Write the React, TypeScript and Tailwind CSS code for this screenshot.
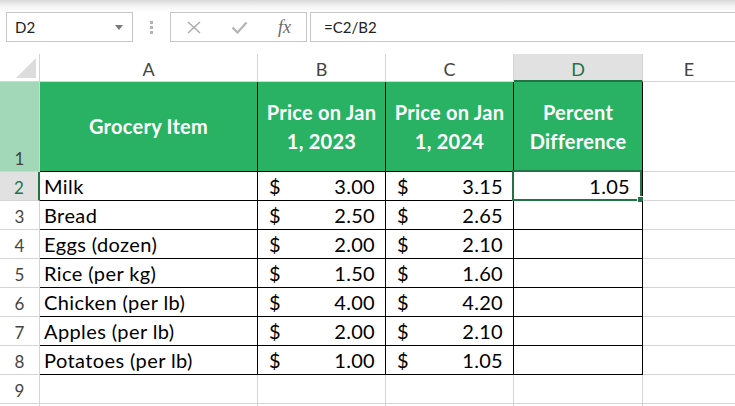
import React from 'react';

const rows = [
  ['Milk', '3.00', '3.15', '1.05'],
  ['Bread', '2.50', '2.65', ''],
  ['Eggs (dozen)', '2.00', '2.10', ''],
  ['Rice (per kg)', '1.50', '1.60', ''],
  ['Chicken (per lb)', '4.00', '4.20', ''],
  ['Apples (per lb)', '2.00', '2.10', ''],
  ['Potatoes (per lb)', '1.00', '1.05', ''],
];

const gray = 'border-[#d4d4d4]';

function RowHead({ n, active }: { n?: number; active?: boolean }) {
  return (
    <div
      className={`flex items-end justify-center pb-[4px] text-[17px] leading-none border-b ${gray} ${
        active ? 'bg-[#e1e1e1] text-[#217346] border-r-2 border-r-[#217346]' : 'bg-white text-[#444] border-r'
      }`}
    >
      {n}
    </div>
  );
}

function Money({ v }: { v: string }) {
  return (
    <div className="flex items-end justify-between pl-[11px] pr-[10px] pb-[4px] text-[20px] leading-none tracking-[0.3px] border-r border-b border-black">
      <span>$</span>
      <span>{v}</span>
    </div>
  );
}

export default function App() {
  return (
    <div className="w-[735px] h-[406px] overflow-hidden bg-white text-black font-['Lato',sans-serif]">
      <div className="h-[12px] bg-gradient-to-b from-[#d8d8d8] via-[#f3f3f3] to-white" />

      {/* formula bar */}
      <div className="flex h-[30px] items-stretch">
        <div className="ml-[6px] w-[127px] flex items-center justify-between border border-[#c6c6c6] pl-[8px] pr-[9px] text-[15px] text-[#222]">
          <span>D2</span>
          <svg width="8" height="5" viewBox="0 0 8 5"><path d="M0 0h8L4 5z" fill="#7a7a7a" /></svg>
        </div>
        <div className="w-[37px] flex flex-col items-center justify-center gap-[2px]">
          <span className="block w-[3px] h-[3px] bg-[#b4b4b4]" />
          <span className="block w-[3px] h-[3px] bg-[#b4b4b4]" />
          <span className="block w-[3px] h-[3px] bg-[#b4b4b4]" />
        </div>
        <div className="w-[137px] flex items-center border border-[#c6c6c6] pl-[16px] gap-[30px]">
          <svg width="14" height="13" viewBox="0 0 14 13">
            <path d="M1 1l12 11M13 1L1 12" stroke="#a9a9a9" strokeWidth="1.4" fill="none" />
          </svg>
          <svg width="17" height="13" viewBox="0 0 17 13">
            <path d="M1.5 6.5l5 5L15.5 1.5" stroke="#b3b3b3" strokeWidth="2.2" fill="none" />
          </svg>
          <span className="font-['Liberation_Serif',serif] italic text-[18px] text-[#6a6a6a] leading-none">fx</span>
        </div>
        <div className="ml-[3px] flex-1 flex items-center border border-r-0 border-[#c6c6c6] pl-[13px] text-[15px] text-[#222]">
          =C2/B2
        </div>
      </div>
      <div className="h-[12px]" />

      {/* sheet grid */}
      <div className="grid grid-cols-[40px_218px_128px_128px_129px_1fr] grid-rows-[28px_90px_repeat(9,29px)]">
        {/* column headers */}
        <div className={`relative border-r border-b ${gray} bg-white`}>
          <svg className="absolute right-[3px] bottom-[3px]" width="20" height="20" viewBox="0 0 20 20">
            <path d="M20 0V20H0z" fill="#dcdcdc" />
          </svg>
        </div>
        {['A', 'B', 'C'].map((c) => (
          <div key={c} className={`flex items-end justify-center pb-[3px] text-[18px] leading-none text-[#444] border-r border-b ${gray}`}>
            {c}
          </div>
        ))}
        <div className={`flex items-end justify-center pb-[2px] text-[18px] leading-none text-[#217346] bg-[#e1e1e1] border-r ${gray} border-b-2 border-b-[#217346]`}>
          D
        </div>
        <div className={`flex items-end justify-center pb-[3px] text-[18px] leading-none text-[#444] border-b ${gray}`}>
          E
        </div>

        {/* row 1 */}
        <div className={`flex items-end justify-center pb-[4px] text-[17px] leading-none text-[#444] bg-[#a2d8b8] border-r border-b ${gray}`}>
          1
        </div>
        <div className="flex items-center justify-center bg-[#29b264] text-white font-bold text-[20px] leading-[29px] tracking-[0.25px] border-r border-b border-black">
          Grocery Item
        </div>
        <div className="flex items-center justify-center text-center bg-[#29b264] text-white font-bold text-[20px] leading-[29px] tracking-[0.25px] border-r border-b border-black">
          Price on Jan
          <br />
          1, 2023
        </div>
        <div className="flex items-center justify-center text-center bg-[#29b264] text-white font-bold text-[20px] leading-[29px] tracking-[0.25px] border-r border-b border-black">
          Price on Jan
          <br />
          1, 2024
        </div>
        <div className="flex items-center justify-center text-center bg-[#29b264] text-white font-bold text-[20px] leading-[29px] tracking-[0.25px] border-r border-b border-black">
          Percent
          <br />
          Difference
        </div>
        <div className={`border-b ${gray}`} />

        {/* data rows */}
        {rows.map((r, i) => (
          <React.Fragment key={r[0]}>
            <RowHead n={i + 2} active={i === 0} />
            <div className="flex items-end pl-[4px] pb-[4px] text-[20px] leading-none tracking-[0.4px] border-r border-b border-black">
              {r[0]}
            </div>
            <Money v={r[1]} />
            <Money v={r[2]} />
            <div className="relative flex items-end justify-end pr-[12px] pb-[4px] text-[20px] leading-none tracking-[0.3px] border-r border-b border-black">
              {r[3]}
              {i === 0 && (
                <div className="absolute -left-[2px] -top-[2px] right-0 -bottom-[1px] border-2 border-[#217346]">
                  <div className="absolute -right-[3px] -bottom-[3px] w-[5px] h-[5px] bg-[#217346] outline outline-1 outline-white" />
                </div>
              )}
            </div>
            <div className={`border-b ${gray}`} />
          </React.Fragment>
        ))}

        {/* empty rows */}
        {[9, 10].map((n) => (
          <React.Fragment key={n}>
            <RowHead n={n === 9 ? n : undefined} />
            <div className={`border-r border-b ${gray}`} />
            <div className={`border-r border-b ${gray}`} />
            <div className={`border-r border-b ${gray}`} />
            <div className={`border-r border-b ${gray}`} />
            <div className={`border-b ${gray}`} />
          </React.Fragment>
        ))}
      </div>
    </div>
  );
}
